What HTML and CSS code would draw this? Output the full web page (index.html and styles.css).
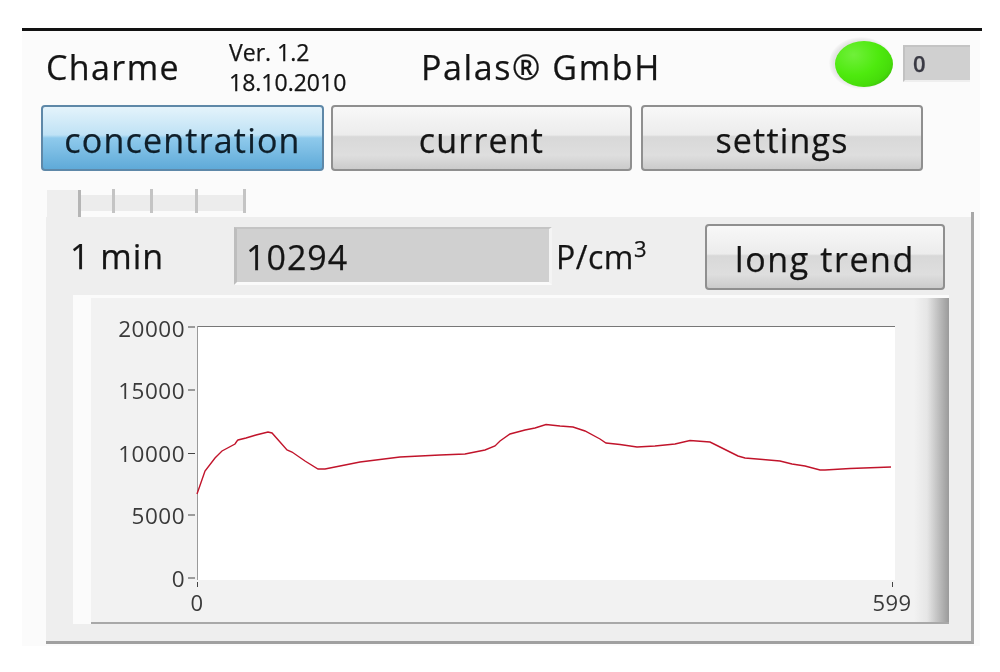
FILE: index.html
```html
<!DOCTYPE html>
<html lang="en">
<head>
<meta charset="utf-8">
<title>Charme</title>
<link rel="stylesheet" href="styles.css">
</head>
<body>
<main class="app">
  <header class="head">
    <span class="title">Charme</span>
    <span class="version">Ver. 1.2<br>18.10.2010</span>
    <span class="maker">Palas® GmbH</span>
    <span class="led"><span class="led-core"></span></span>
    <output class="count">0</output>
  </header>
  <nav class="nav">
    <button class="btn btn-active btn-a">concentration</button>
    <button class="btn btn-b">current</button>
    <button class="btn btn-c">settings</button>
  </nav>
  <div class="tabs">
    <span class="tab t1"></span><span class="tab t2"></span><span class="tab t3"></span><span class="tab t4"></span>
  </div>
  <section class="panel">
    <div class="readout">
      <span class="period">1 min</span>
      <output class="value">10294</output>
      <span class="unit">P/cm<sup>3</sup></span>
      <button class="btn btn-trend">long trend</button>
    </div>
    <div class="frame">
      <svg class="chart" viewBox="0 0 876 329" width="876" height="329">
        <rect class="plot" x="125" y="31" width="697" height="254"/>
        <path class="top" d="M125 31.500H822"/>
        <path class="axis" d="M124.500 31V285"/>
        <path class="tick" d="M115 32H122M115 95H122M115 158.500H122M115 220H122M115 283H122M124.500 287V292M819.500 287V292"/>
        <g class="labels">
          <text x="112" y="42">20000</text>
          <text x="112" y="104">15000</text>
          <text x="112" y="167">10000</text>
          <text x="112" y="229">5000</text>
          <text x="112" y="292">0</text>
        </g>
        <g class="xlabels">
          <text x="124" y="316">0</text>
          <text x="819" y="316">599</text>
        </g>
        <polyline class="trace" points="124,199 132,176 142,163 149,156 162,149 164,146 165,145 173,143 183,140 195,137 199,138 207,147 214,155 219,157 232,166 245,174 252,174 267,171 287,167 327,162 367,160 392,159 412,155 422,151 427,146 437,139 452,135 462,133 473,129.500 487,131 500,132 512,136 527,144 533,148 547,149.500 564,152 582,151 602,149 617,145.500 637,147 645,151 657,157 665,161 672,163 707,166 719,169 732,171 747,175 752,175 777,173.500 818,172"/>
      </svg>
    </div>
  </section>
</main>
</body>
</html>
```
FILE: styles.css
```css
* { box-sizing: border-box; }
html, body { margin: 0; height: 672px; overflow: hidden; background: #fff; }
body { padding: 28px 18px 0 22px; font-family: "Open Sans", "Noto Sans", sans-serif; color: #141414; -webkit-text-stroke: 0.25px currentColor; }

.app {
  width: 960px;
  height: 618px;
  border-top: 3px solid #121212;
  background: linear-gradient(#fbfbfb, #fbfbfb) no-repeat left top / 958px 100%;
  filter: blur(0.45px);
}

.head { display: flex; align-items: flex-start; height: 71px; padding-left: 24px; }
.title { width: 183px; margin-top: 13px; font-size: 34px; font-weight: 500; line-height: 46px; letter-spacing: 1.400px; }
.version { width: 192px; margin-top: 6px; font-size: 23px; font-weight: 500; line-height: 30px; }
.maker { width: 409px; margin-top: 13px; font-size: 34px; font-weight: 500; line-height: 46px; letter-spacing: 1.600px; }
.led {
  display: flex; align-items: center; justify-content: center;
  width: 64px; height: 52px; margin-top: 6px; margin-left: -1px; border-radius: 50%;
  background: radial-gradient(ellipse at center, #e4e4e4 60%, #fbfbfb 72%);
}
.led-core {
  display: block; width: 58px; height: 46px; margin-left: 6px; margin-top: 2px; border-radius: 50%;
  background: radial-gradient(ellipse at 32% 30%, #70f03a 0, #4eea0e 45%, #46dc0a 70%, #2f9a10 100%);
}
.count {
  width: 67px; height: 37px; margin: 14px 0 0 10px; padding-left: 8px;
  background: #d0d0d0; border-left: 2px solid #c2c2c2; border-bottom: 2px solid #efefef; border-top: 2px solid #c4c4c4;
  font-size: 22px; font-weight: 600; line-height: 32px; color: #3a3a44;
}

.nav { display: flex; height: 66px; margin-left: 19px; margin-top: 3px; }
.btn {
  display: block; padding: 3px 0 0; height: 100%;
  border: 2px solid #8f8f8f; border-radius: 4px;
  background: linear-gradient(#f8f8f8 0, #ececec 45%, #d8d8d8 48%, #dedede 78%, #cbcbcb 100%);
  color: #141414; font-family: inherit; font-size: 34px; font-weight: 500; line-height: 46px; letter-spacing: 1.200px;
}
.btn-active {
  border-color: #5e88a8;
  background: linear-gradient(#e4f3fb 0, #bfe2f5 45%, #8fcaec 50%, #5faad8 100%);
  color: #0f1f2a;
}
.btn-a { width: 283px; }
.btn-b { width: 301px; margin-left: 7px; }
.btn-c { width: 282px; margin-left: 9px; }

.tabs { display: flex; height: 30px; margin: 16px 0 0 25px; }
.tabs::before { content: ""; width: 31px; height: 27px; margin-top: 3px; background: #eee; border-right: 3px solid #b5b5b5; }
.tab {
  height: 24px; margin-top: 2px;
  border-right: 3px solid #c4c4c4;
  background: linear-gradient(#fbfbfb 0, #fbfbfb 6px, #ececec 6px, #ececec 22px, #fbfbfb 22px) no-repeat;
}
.t1 { width: 34px; }
.t2 { width: 38px; }
.t3 { width: 45px; }
.t4 { width: 48px; }

.panel {
  position: relative;
  width: 928px; height: 427px; margin-left: 24px;
  background: #eeeeee;
  border-right: 3px solid #a8a8a8; border-bottom: 3px solid #a0a0a0;
  padding-top: 7px;
}
.panel::before { content: ""; position: absolute; right: -3px; top: -5px; width: 3px; height: 5px; background: #a8a8a8; }
.readout { display: flex; align-items: flex-start; height: 71px; }
.period { width: 164px; margin: 9px 0 0 24px; font-size: 34px; font-weight: 500; line-height: 46px; letter-spacing: 1px; }
.value {
  width: 318px; height: 58px; margin-top: 3px; padding-left: 9px;
  background: #d0d0d0; border-left: 3px solid #bdbdbd; border-bottom: 3px solid #fafafa; border-right: 3px solid #f4f4f4; border-top: 2px solid #c4c4c4;
  font-size: 34px; font-weight: 500; line-height: 56px; letter-spacing: 1px;
}
.unit { width: 149px; margin: 10px 0 0 4px; font-size: 32px; font-weight: 500; line-height: 46px; letter-spacing: .5px; }
.unit sup { font-size: 22px; line-height: 0; }
.btn-trend { width: 240px; height: 66px; letter-spacing: 1.600px; }

.frame {
  width: 876px; height: 329px; margin-left: 27px;
  background: linear-gradient(90deg, #f2f2f2 0, #f2f2f2 96%, #e6e6e6 97.500%, #9a9a9a 100%);
  box-shadow: inset 18px 0 0 #fbfbfb, inset 0 3px 0 #fbfbfb, inset 0 -2px 0 #a8a8a8;
}
.chart { display: block; }
.plot { fill: #fff; }
.top, .axis { stroke: #9a9a9a; stroke-width: 1; fill: none; }
.top { stroke: #777; }
.tick { stroke: #444; stroke-width: 1; fill: none; }
.labels text { text-anchor: end; font-size: 22.500px; font-weight: 500; letter-spacing: .5px; fill: #3a3a3a; -webkit-text-stroke: 0; }
.xlabels text { text-anchor: middle; font-size: 22px; font-weight: 500; letter-spacing: .5px; fill: #3a3a3a; -webkit-text-stroke: 0; }
.trace { fill: none; stroke: #c1142b; stroke-width: 1.400; }
```
